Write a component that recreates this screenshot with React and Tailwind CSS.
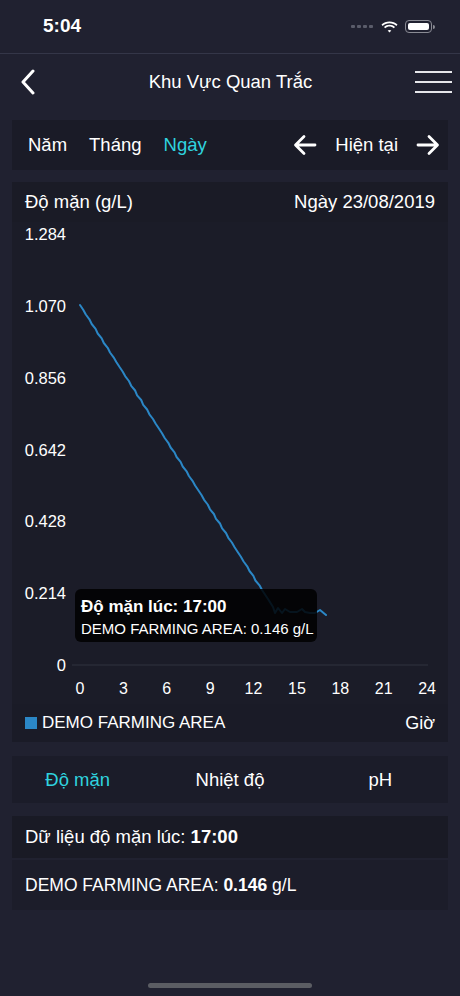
import React from "react";

const CYAN = "#2fd3df";
const LINE = "#2b87c6";

// chart geometry (svg coords, origin = chart area top-left)
const X0 = 68;
const PX_PER_HOUR = 14.46;
const Y_ZERO = 443;
const Y_TOP = 12;

const yTicks = ["1.284", "1.070", "0.856", "0.642", "0.428", "0.214", "0"];
const xTicks = [0, 3, 6, 9, 12, 15, 18, 21, 24];

const buildLine = () => {
  const pts = [];
  // main descent from (68,83) to (250,368), nearly straight with a tiny jitter
  const steps = 60;
  for (let i = 0; i <= steps; i++) {
    const t = i / steps;
    const jitter = i === 0 || i === steps ? 0 : Math.sin(i * 2.9) * 0.5;
    pts.push([68 + 182 * t + jitter, 83 + 285 * t]);
  }
  const tail = [
    [256, 377], [261, 385], [263, 391], [266, 386], [270, 391], [273, 387],
    [278, 390], [285, 390], [290, 387], [293, 390], [298, 391], [303, 391],
    [308, 388], [314, 393],
  ];
  return pts.concat(tail).map(([x, y]) => `${x.toFixed(1)},${y.toFixed(1)}`).join(" ");
};

const StatusBar = () => (
  <div className="h-[54px] flex items-center justify-between pl-[43px] pr-[25px] border-b border-[#343648]">
    <span className="text-[19px] font-bold text-white">5:04</span>
    <div className="flex items-center gap-[7px]">
      <div className="flex items-center gap-[2px] mr-[1px]">
        {[0, 1, 2, 3].map((i) => (
          <span key={i} className="w-[4px] h-[3px] rounded-[1px] bg-[#5a5c6a]" />
        ))}
      </div>
      <svg width="17" height="12" viewBox="0 0 17 12">
        <path d="M8.5 2.2c2.6 0 5 1 6.8 2.7l1.2-1.3C14.4 1.6 11.6.4 8.5.4S2.6 1.6.5 3.6l1.2 1.3C3.5 3.2 5.9 2.2 8.5 2.2z" fill="white" />
        <path d="M8.5 5.6c1.6 0 3.1.6 4.3 1.7l1.2-1.3C12.5 4.6 10.6 3.8 8.5 3.8S4.5 4.6 3 6l1.2 1.3c1.2-1.1 2.7-1.7 4.300-1.7z" fill="white" />
        <path d="M8.5 8.9c.7 0 1.3.2 1.8.7l-1.8 2-1.8-2c.5-.5 1.1-.7 1.8-.7z" fill="white" />
      </svg>
      <div className="flex items-center">
        <div className="w-[27px] h-[13px] rounded-[4px] border border-[#8a8b94] p-[2px]">
          <div className="w-full h-full rounded-[2px] bg-white" />
        </div>
        <div className="w-[2px] h-[4px] rounded-r-sm bg-[#8a8b94] ml-[1px]" />
      </div>
    </div>
  </div>
);

const NavBar = () => (
  <div className="h-[56px] flex items-center justify-between pl-[20px] pr-[8px]">
    <svg width="16" height="26" viewBox="0 0 16 26">
      <path d="M13 2 L3 13 L13 24" fill="none" stroke="white" strokeWidth="3" strokeLinecap="round" strokeLinejoin="round" />
    </svg>
    <span className="text-[18.5px] text-white pl-[10px]">Khu Vực Quan Trắc</span>
    <div className="w-[37px] flex flex-col gap-[8px]">
      <span className="h-[2px] bg-[#e6e6ea]" />
      <span className="h-[2px] bg-[#e6e6ea]" />
      <span className="h-[2px] bg-[#e6e6ea]" />
    </div>
  </div>
);

const Arrow = ({ dir }) => (
  <svg width="24" height="22" viewBox="0 0 24 22" className={dir === "right" ? "rotate-180" : ""}>
    <path d="M22 11 H3 M11 2.5 L2.5 11 L11 19.5" fill="none" stroke="white" strokeWidth="2.8" strokeLinecap="round" strokeLinejoin="round" />
  </svg>
);

const FilterBar = () => (
  <div className="mx-[12px] mt-[10px] h-[50px] bg-[#1a1b27] flex items-center justify-between pl-[16px] pr-[8px] text-[18.5px] text-white">
    <div className="flex items-center gap-[22px]">
      <span>Năm</span>
      <span>Tháng</span>
      <span style={{ color: CYAN }}>Ngày</span>
    </div>
    <div className="flex items-center gap-[18px]">
      <Arrow dir="left" />
      <span>Hiện tại</span>
      <Arrow dir="right" />
    </div>
  </div>
);

const Chart = () => (
  <div className="relative h-[482px]">
    <svg width="436" height="482" viewBox="0 0 436 482" className="block">
      <line x1="60" y1={Y_ZERO} x2="416" y2={Y_ZERO} stroke="#30323f" strokeWidth="1" />
      {yTicks.map((t, i) => (
        <text
          key={t}
          x="54"
          y={Y_TOP + i * ((Y_ZERO - Y_TOP) / 6) + 6}
          textAnchor="end"
          fill="white"
          fontSize="16.5"
          fontFamily="'Liberation Sans', Arial, sans-serif"
        >
          {t}
        </text>
      ))}
      {xTicks.map((h) => (
        <text
          key={h}
          x={X0 + h * PX_PER_HOUR}
          y="472"
          textAnchor="middle"
          fill="white"
          fontSize="16"
          fontFamily="'Liberation Sans', Arial, sans-serif"
        >
          {h}
        </text>
      ))}
      <polyline points={buildLine()} fill="none" stroke={LINE} strokeWidth="2" strokeLinejoin="round" strokeLinecap="round" />
    </svg>
    <div className="absolute left-[63px] top-[367px] w-[242px] h-[53px] rounded-[6px] bg-black/85 pl-[6px] pt-[7px]">
      <div className="text-[17px] font-bold text-white leading-[22px]">Độ mặn lúc: 17:00</div>
      <div className="text-[15px] text-white leading-[21px]">DEMO FARMING AREA: 0.146 g/L</div>
    </div>
  </div>
);

const ChartCard = () => (
  <div className="mx-[12px] mt-[12px] bg-[#1b1c28]">
    <div className="h-[40px] flex items-center justify-between px-[13px] text-[18.5px] text-white bg-[#1a1b26]">
      <span>Độ mặn (g/L)</span>
      <span>Ngày 23/08/2019</span>
    </div>
    <Chart />
    <div className="h-[38px] flex items-center justify-between px-[13px] text-[17px] text-white bg-[#1a1b27]">
      <div className="flex items-center gap-[5px]">
        <span className="w-[12px] h-[12px]" style={{ background: LINE }} />
        <span>DEMO FARMING AREA</span>
      </div>
      <span className="text-[18px]">Giờ</span>
    </div>
  </div>
);

const Tabs = () => (
  <div className="mx-[12px] mt-[14px] h-[47px] bg-[#1b1c29] grid grid-cols-3 items-center text-[18.5px] text-white">
    <span className="text-center pr-[14px]" style={{ color: CYAN }}>Độ mặn</span>
    <span className="text-center">Nhiệt độ</span>
    <span className="text-center pl-[10px]">pH</span>
  </div>
);

const DataRows = () => (
  <div className="mx-[12px] mt-[13px] flex flex-col gap-[2px] text-white">
    <div className="h-[42px] flex items-center px-[13px] bg-[#191a25] text-[18.5px]">
      <span>
        Dữ liệu độ mặn lúc: <b>17:00</b>
      </span>
    </div>
    <div className="h-[50px] flex items-center px-[13px] bg-[#1c1d2a] text-[17.5px]">
      <span>
        DEMO FARMING AREA: <b>0.146</b> g/L
      </span>
    </div>
  </div>
);

export default function App() {
  return (
    <div
      className="w-[460px] h-[996px] bg-[#202130] flex flex-col overflow-hidden"
      style={{ fontFamily: "'Liberation Sans', Arial, sans-serif" }}
    >
      <StatusBar />
      <NavBar />
      <FilterBar />
      <ChartCard />
      <Tabs />
      <DataRows />
      <div className="flex-1 flex items-end justify-center pb-[8px]">
        <div className="w-[164px] h-[5px] rounded-full bg-[#5b5d63]" />
      </div>
    </div>
  );
}
